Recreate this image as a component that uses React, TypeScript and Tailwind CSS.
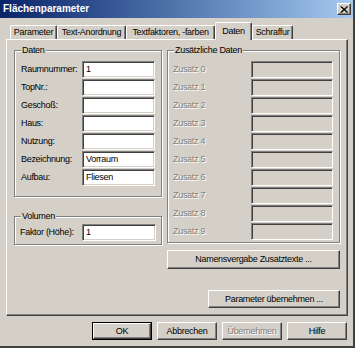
import React from "react";

const sunken =
  "border border-t-[#808080] border-l-[#808080] border-r-white border-b-white shadow-[inset_1px_1px_0_#404040,inset_-1px_-1px_0_#d4d0c8]";
const raised =
  "border border-t-white border-l-white border-r-[#404040] border-b-[#404040] shadow-[inset_-1px_-1px_0_#808080]";
const disabledText = "text-[#808080] [text-shadow:1px_1px_0_#ffffff]";

function Edit({ value, w, disabled }: { value?: string; w: number; disabled?: boolean }) {
  return (
    <div
      className={`${sunken} h-[17px] flex items-center pl-[3px] leading-none whitespace-nowrap ${disabled ? "bg-[#d4d0c8]" : "bg-white"}`}
      style={{ width: w }}
    >
      {value}
    </div>
  );
}

function Group({ label, className, children }: { label: string; className?: string; children: React.ReactNode }) {
  return (
    <div className={`relative border border-[#808080] shadow-[1px_1px_0_#ffffff,inset_1px_1px_0_#ffffff] ${className ?? ""}`}>
      <span className="absolute -top-[7px] left-[6px] px-[1px] bg-[#d4d0c8] leading-[12px] whitespace-nowrap">{label}</span>
      {children}
    </div>
  );
}

function Button({ label, w, h = 18, def, disabled, className }: { label: string; w: number; h?: number; def?: boolean; disabled?: boolean; className?: string }) {
  const inner = (
    <div
      className={`${raised} bg-[#d4d0c8] flex items-center justify-center leading-none h-full w-full whitespace-nowrap ${disabled ? disabledText : ""}`}
    >
      {label}
    </div>
  );
  return (
    <div className={`${def ? "border border-black" : ""} ${className ?? ""}`} style={{ width: w, height: h }}>
      {inner}
    </div>
  );
}

const tabs = [
  { label: "Parameter", w: 47 },
  { label: "Text-Anordnung", w: 69 },
  { label: "Textfaktoren, -farben", w: 89 },
  { label: "Daten", w: 37, active: true },
  { label: "Schraffur", w: 41 },
];

const datenRows = [
  ["Raumnummer:", "1"],
  ["TopNr.:", ""],
  ["Geschoß:", ""],
  ["Haus:", ""],
  ["Nutzung:", ""],
  ["Bezeichnung:", "Vorraum"],
  ["Aufbau:", "Fliesen"],
];

export default function App() {
  return (
    <div className="w-[355px] h-[348px] bg-[#d4d0c8] text-black text-[9px] tracking-[-0.3px] font-['Liberation_Sans',Arial,sans-serif] flex flex-col border-r-2 border-b-2 border-r-[#404040] border-b-[#404040] overflow-hidden">
      {/* Title bar */}
      <div className="h-[18px] shrink-0 bg-linear-to-r from-[#0a246a] to-[#a6caf0] flex items-center justify-between pl-[3px] pr-[2px]">
        <span className="text-white font-bold text-[10px] tracking-normal leading-none">Flächenparameter</span>
        <div className={`${raised} bg-[#d4d0c8] w-[14px] h-[12px] flex items-center justify-center`}>
          <svg width="8" height="7" viewBox="0 0 8 7">
            <path d="M0.5 0.5 L7 6.5 M1.5 0.5 L8 6.5 M7 0.5 L0.5 6.5 M8 0.5 L1.5 6.5" stroke="#000" strokeWidth="1" />
          </svg>
        </div>
      </div>

      {/* Tabs */}
      <div className="h-[17px] mt-[4px] shrink-0 flex items-end pl-[10px] relative z-10">
        {tabs.map((t) =>
          t.active ? (
            <div
              key={t.label}
              className="h-[18px] -mb-[1px] bg-[#d4d0c8] border-t border-l border-t-white border-l-white border-r border-r-[#404040] shadow-[inset_-1px_0_0_#808080] rounded-t-[2px] flex items-start justify-center pt-[4px] leading-none whitespace-nowrap"
              style={{ width: t.w }}
            >
              {t.label}
            </div>
          ) : (
            <div
              key={t.label}
              className="h-[14px] bg-[#d4d0c8] border-t border-l border-t-white border-l-white border-r border-r-[#404040] shadow-[inset_-1px_0_0_#808080] rounded-t-[2px] flex items-center justify-center leading-none whitespace-nowrap"
              style={{ width: t.w }}
            >
              {t.label}
            </div>
          )
        )}
      </div>

      {/* Panel */}
      <div className="ml-[6px] w-[342px] h-[277px] shrink-0 border border-t-white border-l-white border-r-[#404040] border-b-[#404040] shadow-[inset_-1px_-1px_0_#808080] pt-[10px] pl-[7px] flex">
        {/* Left column */}
        <div className="w-[148px] flex flex-col">
          <Group label="Daten" className="h-[147px] pt-[10px] pl-[6px]">
            <div className="flex flex-col gap-[1px]">
              {datenRows.map(([l, v]) => (
                <div key={l} className="flex items-center h-[17px]">
                  <span className="w-[61px] leading-none whitespace-nowrap">{l}</span>
                  <Edit value={v} w={73} />
                </div>
              ))}
            </div>
          </Group>
          <Group label="Volumen" className="mt-[19px] h-[29px] pt-[7px] pl-[5px]">
            <div className="flex items-center h-[17px]">
              <span className="w-[62px] leading-none whitespace-nowrap">Faktor (Höhe):</span>
              <Edit value="1" w={74} />
            </div>
          </Group>
        </div>

        {/* Right column */}
        <div className="ml-[5px] w-[173px] flex flex-col">
          <Group label="Zusätzliche Daten" className="h-[193px] pt-[10px] pl-[5px]">
            <div className="flex flex-col gap-[1px]">
              {Array.from({ length: 10 }, (_, i) => (
                <div key={i} className="flex items-center h-[17px]">
                  <span className={`w-[78px] leading-none whitespace-nowrap ${disabledText}`}>Zusatz {i}</span>
                  <Edit w={82} disabled />
                </div>
              ))}
            </div>
          </Group>
          <Button label="Namensvergabe Zusatztexte ..." w={173} h={19} className="mt-[7px]" />
          <Button label="Parameter übernehmen ..." w={132} h={18} className="mt-[21px] self-end" />
        </div>
      </div>

      {/* Bottom buttons */}
      <div className="mt-[6px] flex justify-end gap-[5px] pr-[6px]">
        <Button label="OK" w={60} def />
        <Button label="Abbrechen" w={60} />
        <Button label="Übernehmen" w={60} disabled />
        <Button label="Hilfe" w={60} />
      </div>
    </div>
  );
}
